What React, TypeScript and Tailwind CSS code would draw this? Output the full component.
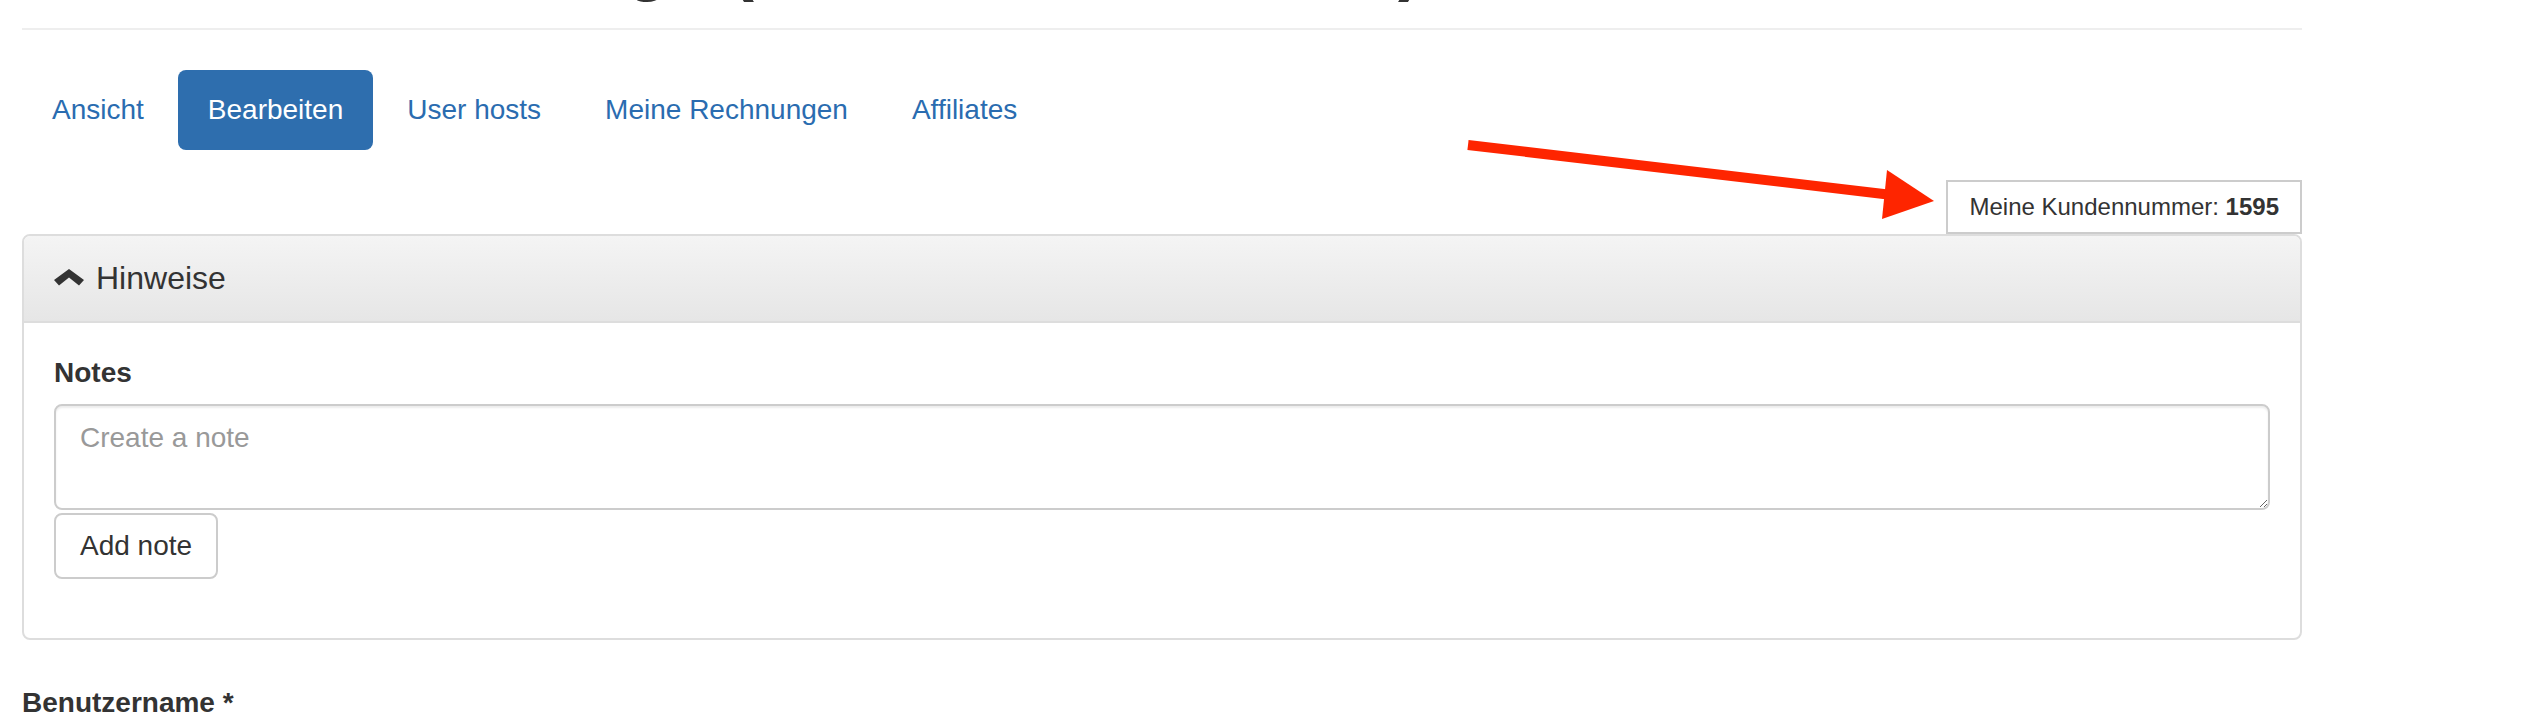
import React from 'react';

const tabs = ['Ansicht', 'Bearbeiten', 'User hosts', 'Meine Rechnungen', 'Affiliates'];

export default function App() {
  return (
    <div className="relative min-h-screen overflow-hidden bg-white font-['Liberation_Sans',Arial,sans-serif] text-[#333333]">
      <div className="ml-[22px] flex w-[2280px] flex-col">
        {/* page header, scrolled mostly out of view */}
        <div className="border-b-2 border-[#eeeeee] pb-[28px]">
          <h1 className="-mt-[74px] whitespace-nowrap text-[72px] font-bold leading-none">
            Kundenverwaltungs (AB, Lisa Hoffmann)
          </h1>
        </div>

        {/* Tabs */}
        <ul className="mt-[40px] flex text-[28px] leading-[40px]">
          {tabs.map((t, i) => (
            <li key={t} className={i > 0 ? 'ml-1' : ''}>
              <a
                href="#"
                className={`block rounded-[8px] px-[30px] py-[20px] ${
                  t === 'Bearbeiten' ? 'bg-[#2e6eae] text-white' : 'text-[#2a6cb0]'
                }`}
              >
                {t}
              </a>
            </li>
          ))}
        </ul>

        {/* Customer number */}
        <div className="mt-[30px] flex justify-end">
          <div className="border-2 border-[#cccccc] px-[21px] py-[8px] text-[24px] leading-[34px]">
            Meine Kundennummer: <b>1595</b>
          </div>
        </div>

        {/* Notes panel */}
        <div className="overflow-hidden rounded-[8px] border-2 border-[#dddddd]">
          <div className="border-b-2 border-[#dddddd] bg-gradient-to-b from-[#f4f4f4] to-[#e6e6e6] px-[30px] py-[20px]">
            <h4 className="flex items-center text-[32px] leading-[45px]">
              <svg width="30" height="17" viewBox="0 0 30 17" className="mr-[12px] -mt-[3px]">
                <path d="M15 0 L30 11 L25 16.5 L15 8.5 L5 16.5 L0 11 Z" fill="#333333" />
              </svg>
              Hinweise
            </h4>
          </div>
          <div className="p-[30px]">
            <label className="mb-[11px] block text-[28px] font-bold leading-[40px]">Notes</label>
            <textarea
              placeholder="Create a note"
              className="block h-[106px] w-full rounded-[8px] border-2 border-[#cccccc] px-[24px] py-[12px] text-[28px] leading-[40px] text-[#555555] shadow-[inset_0_2px_2px_rgba(0,0,0,0.075)] outline-none placeholder:text-[#999999]"
            />
            <button className="mb-[29px] mt-[3px] h-[66px] rounded-[8px] border-2 border-[#cccccc] bg-white px-[24px] text-[28px] leading-[40px] text-[#333333]">
              Add note
            </button>
          </div>
        </div>

        <label className="mt-[43px] block text-[28px] font-bold leading-[40px]">Benutzername *</label>
      </div>

      {/* annotation arrow */}
      <svg
        className="absolute left-[1440px] top-[130px]"
        width="500"
        height="95"
        viewBox="0 0 500 95"
      >
        <line x1="28" y1="15" x2="452" y2="65" stroke="#fe2500" strokeWidth="10" />
        <polygon points="447,40 494,71 442,89" fill="#fe2500" />
      </svg>
    </div>
  );
}
